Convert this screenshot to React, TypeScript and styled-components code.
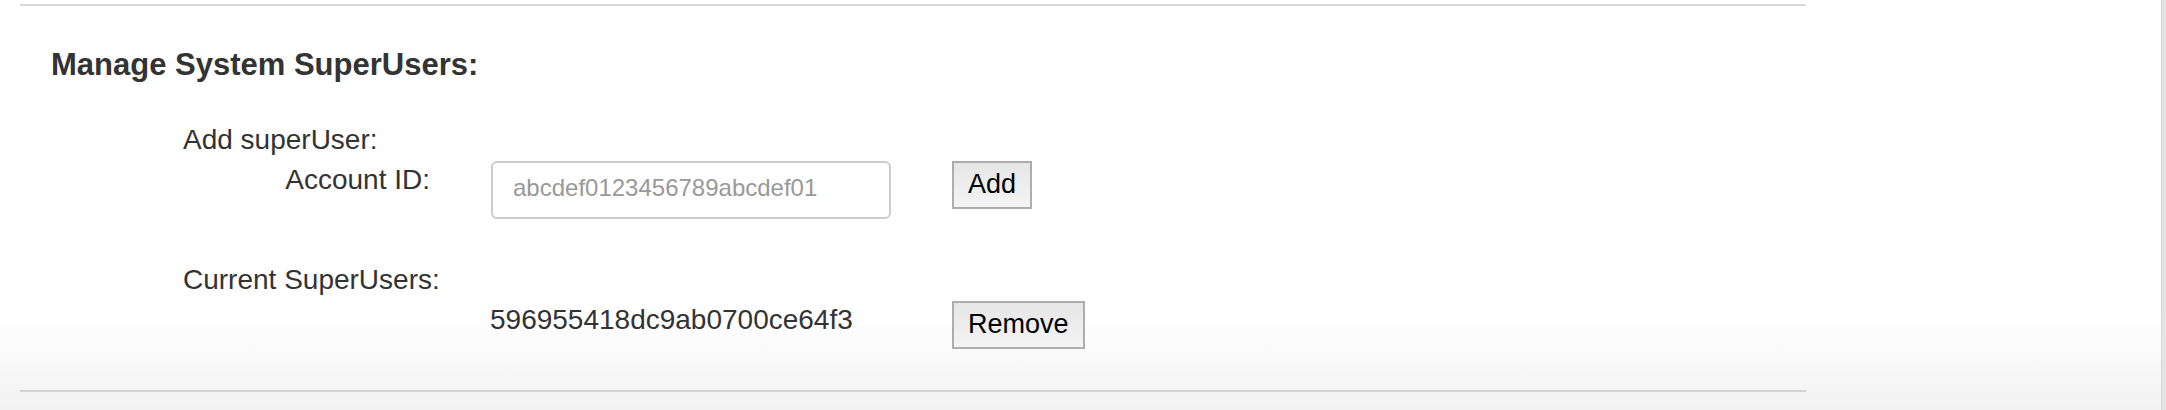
import React from "react";
import styled, { createGlobalStyle } from "styled-components";

const GlobalStyle = createGlobalStyle`
  html, body {
    margin: 0;
    padding: 0;
  }
  body {
    min-height: 410px;
    background: linear-gradient(to bottom, #ffffff 0px, #ffffff 315px, #f8f8f8 365px, #f2f2f2 410px);
    font-family: "Liberation Sans", Arial, Helvetica, sans-serif;
    color: #333333;
  }
`;

const Shell = styled.div`
  display: flex;
  height: 410px;
`;

const Main = styled.div`
  flex: 1;
`;

const ScrollEdge = styled.div`
  width: 4px;
  background: #e4e4e4;
  border-left: 1px solid #d6d6d6;
`;

const Panel = styled.section`
  margin: 4px 0 0 20px;
  width: 1786px;
  border-top: 2px solid #d9d9d9;
  border-bottom: 2px solid #d4d4d4;
  padding: 41px 0 41px 31px;
  box-sizing: border-box;
`;

const Title = styled.h3`
  margin: 0;
  font-size: 31px;
  line-height: 36px;
  font-weight: bold;
  color: #333333;
`;

const Form = styled.div`
  margin: 41px 0 0 132px;
  display: flex;
  flex-direction: column;
`;

const SubLabel = styled.div<{ $gapTop?: number }>`
  font-size: 28px;
  line-height: 32px;
  margin-top: ${(p) => p.$gapTop ?? 0}px;
`;

const Row = styled.div`
  display: grid;
  grid-template-columns: 247px 400px auto;
  column-gap: 61px;
  align-items: start;
  margin-top: 5px;
`;

const FieldLabel = styled.label`
  font-size: 28px;
  line-height: 32px;
  text-align: right;
  margin-top: 3px;
`;

const Value = styled.div`
  font-size: 28px;
  line-height: 32px;
  margin-top: 3px;
  margin-left: -1px;
`;

const TextInput = styled.input`
  box-sizing: border-box;
  width: 400px;
  height: 58px;
  border: 2px solid #cccccc;
  border-radius: 6px;
  padding: 0 20px 4px;
  font-family: "Liberation Sans", Arial, Helvetica, sans-serif;
  font-size: 24px;
  color: #333333;
  background: #ffffff;
  outline: none;
  &::placeholder {
    color: #999999;
  }
`;

const Button = styled.button`
  justify-self: start;
  box-sizing: border-box;
  height: 48px;
  padding: 0 14px 2px;
  border: 2px solid #adadad;
  border-radius: 0;
  background: linear-gradient(to bottom, #e6e6e6, #f4f4f4);
  font-family: "Liberation Sans", Arial, Helvetica, sans-serif;
  font-size: 27px;
  color: #000000;
  cursor: pointer;
`;

export default function App() {
  return (
    <>
      <GlobalStyle />
      <Shell>
        <Main>
          <Panel>
            <Title>Manage System SuperUsers:</Title>
            <Form>
              <SubLabel>Add superUser:</SubLabel>
              <Row>
                <FieldLabel htmlFor="acct">Account ID:</FieldLabel>
                <TextInput id="acct" placeholder="abcdef0123456789abcdef01" />
                <Button>Add</Button>
              </Row>
              <SubLabel $gapTop={45}>Current SuperUsers:</SubLabel>
              <Row>
                <span />
                <Value>596955418dc9ab0700ce64f3</Value>
                <Button>Remove</Button>
              </Row>
            </Form>
          </Panel>
        </Main>
        <ScrollEdge />
      </Shell>
    </>
  );
}
